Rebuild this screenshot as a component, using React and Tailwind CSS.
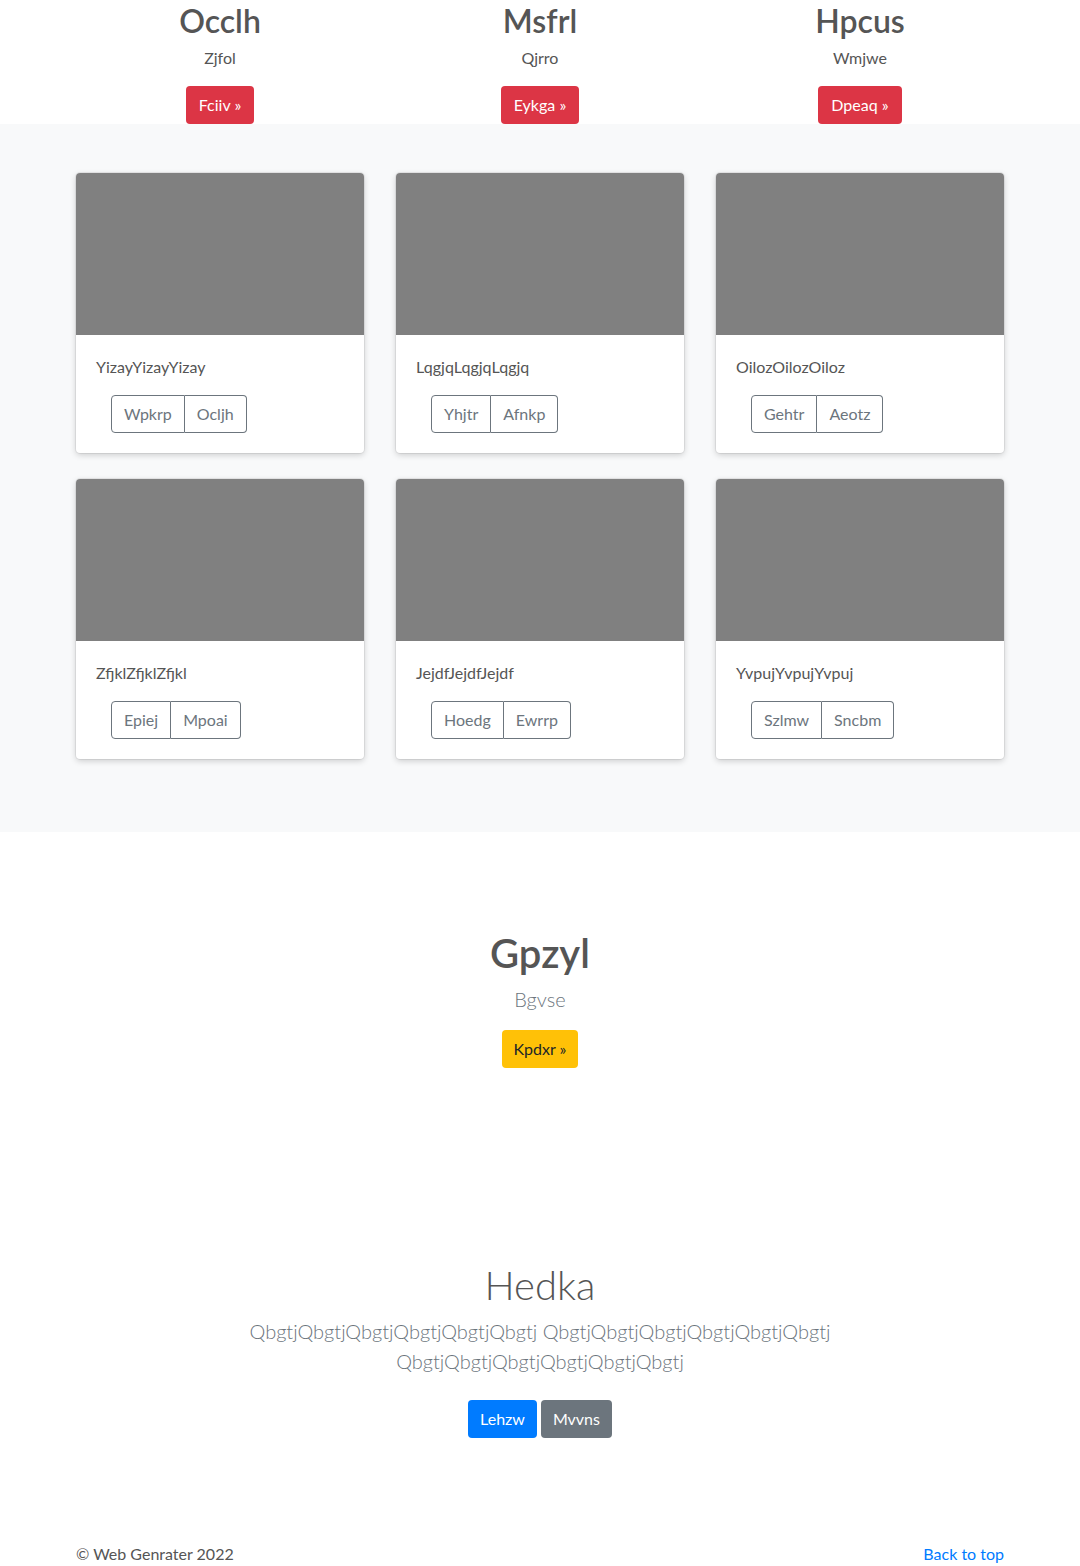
import React from "react";

const tops = [
  { title: "Occlh", sub: "Zjfol", btn: "Fciiv" },
  { title: "Msfrl", sub: "Qjrro", btn: "Eykga" },
  { title: "Hpcus", sub: "Wmjwe", btn: "Dpeaq" },
];

const cards = [
  { text: "YizayYizayYizay", a: "Wpkrp", b: "Ocljh" },
  { text: "LqgjqLqgjqLqgjq", a: "Yhjtr", b: "Afnkp" },
  { text: "OilozOilozOiloz", a: "Gehtr", b: "Aeotz" },
  { text: "ZfjklZfjklZfjkl", a: "Epiej", b: "Mpoai" },
  { text: "JejdfJejdfJejdf", a: "Hoedg", b: "Ewrrp" },
  { text: "YvpujYvpujYvpuj", a: "Szlmw", b: "Sncbm" },
];

const Card = ({ text, a, b }) => (
  <div className="bg-white rounded overflow-hidden shadow-[0_0_0_1px_rgba(0,0,0,0.06),0_2px_6px_rgba(0,0,0,0.18)]">
    <div className="h-[162px] bg-[#808080]" />
    <div className="p-5">
      <p className="text-base leading-6 text-[#555] mb-4">{text}</p>
      <div className="ml-[15px] inline-flex">
        <button className="h-[38px] px-3 text-base text-[#6c757d] border border-[#6c757d] rounded-l">
          {a}
        </button>
        <button className="h-[38px] px-3 text-base text-[#6c757d] border border-l-0 border-[#6c757d] rounded-r">
          {b}
        </button>
      </div>
    </div>
  </div>
);

export default function App() {
  return (
    <div className="bg-white font-['Lato','Liberation_Sans',sans-serif] text-[#555]">
      <div className="w-[960px] mx-auto grid grid-cols-3 text-center">
        {tops.map((t) => (
          <div key={t.title} className="flex flex-col items-center">
            <h2 className="pt-[2px] text-[32px] leading-[38px] font-semibold mb-[6px]">{t.title}</h2>
            <p className="text-base leading-6 mb-4">{t.sub}</p>
            <button className="h-[38px] px-[13px] text-base text-white bg-[#dc3545] rounded">
              {t.btn} »
            </button>
          </div>
        ))}
      </div>

      <div className="bg-[#f8f9fa] pt-[49px] pb-[73px]">
        <div className="w-[928px] mx-auto grid grid-cols-3 gap-x-8 gap-y-[26px]">
          {cards.map((c) => (
            <Card key={c.text} {...c} />
          ))}
        </div>
      </div>

      <div className="pt-[97px] text-center flex flex-col items-center">
        <h1 className="text-[40px] leading-[48px] font-semibold mb-[7px]">Gpzyl</h1>
        <p className="text-xl leading-[30px] font-light text-[#6c757d] mb-4">Bgvse</p>
        <button className="h-[38px] px-3 text-base text-[#212529] bg-[#ffc107] rounded">
          Kpdxr »
        </button>
      </div>

      <div className="pt-[193px] text-center flex flex-col items-center">
        <h1 className="text-[40px] leading-[48px] font-light mb-[7px]">Hedka</h1>
        <p className="max-w-[610px] text-xl leading-[30px] font-light text-[#6c757d] mb-6">
          QbgtjQbgtjQbgtjQbgtjQbgtjQbgtj QbgtjQbgtjQbgtjQbgtjQbgtjQbgtj QbgtjQbgtjQbgtjQbgtjQbgtjQbgtj
        </p>
        <div className="flex gap-1">
          <button className="h-[38px] px-3 text-base text-white bg-[#007bff] rounded">Lehzw</button>
          <button className="h-[38px] px-3 text-base text-white bg-[#6c757d] rounded">Mvvns</button>
        </div>
      </div>

      <footer className="w-[928px] mx-auto mt-[104px] flex justify-between text-base leading-6">
        <p className="text-[#555]">© Web Genrater 2022</p>
        <a href="#" className="text-[#007bff]">Back to top</a>
      </footer>
    </div>
  );
}
